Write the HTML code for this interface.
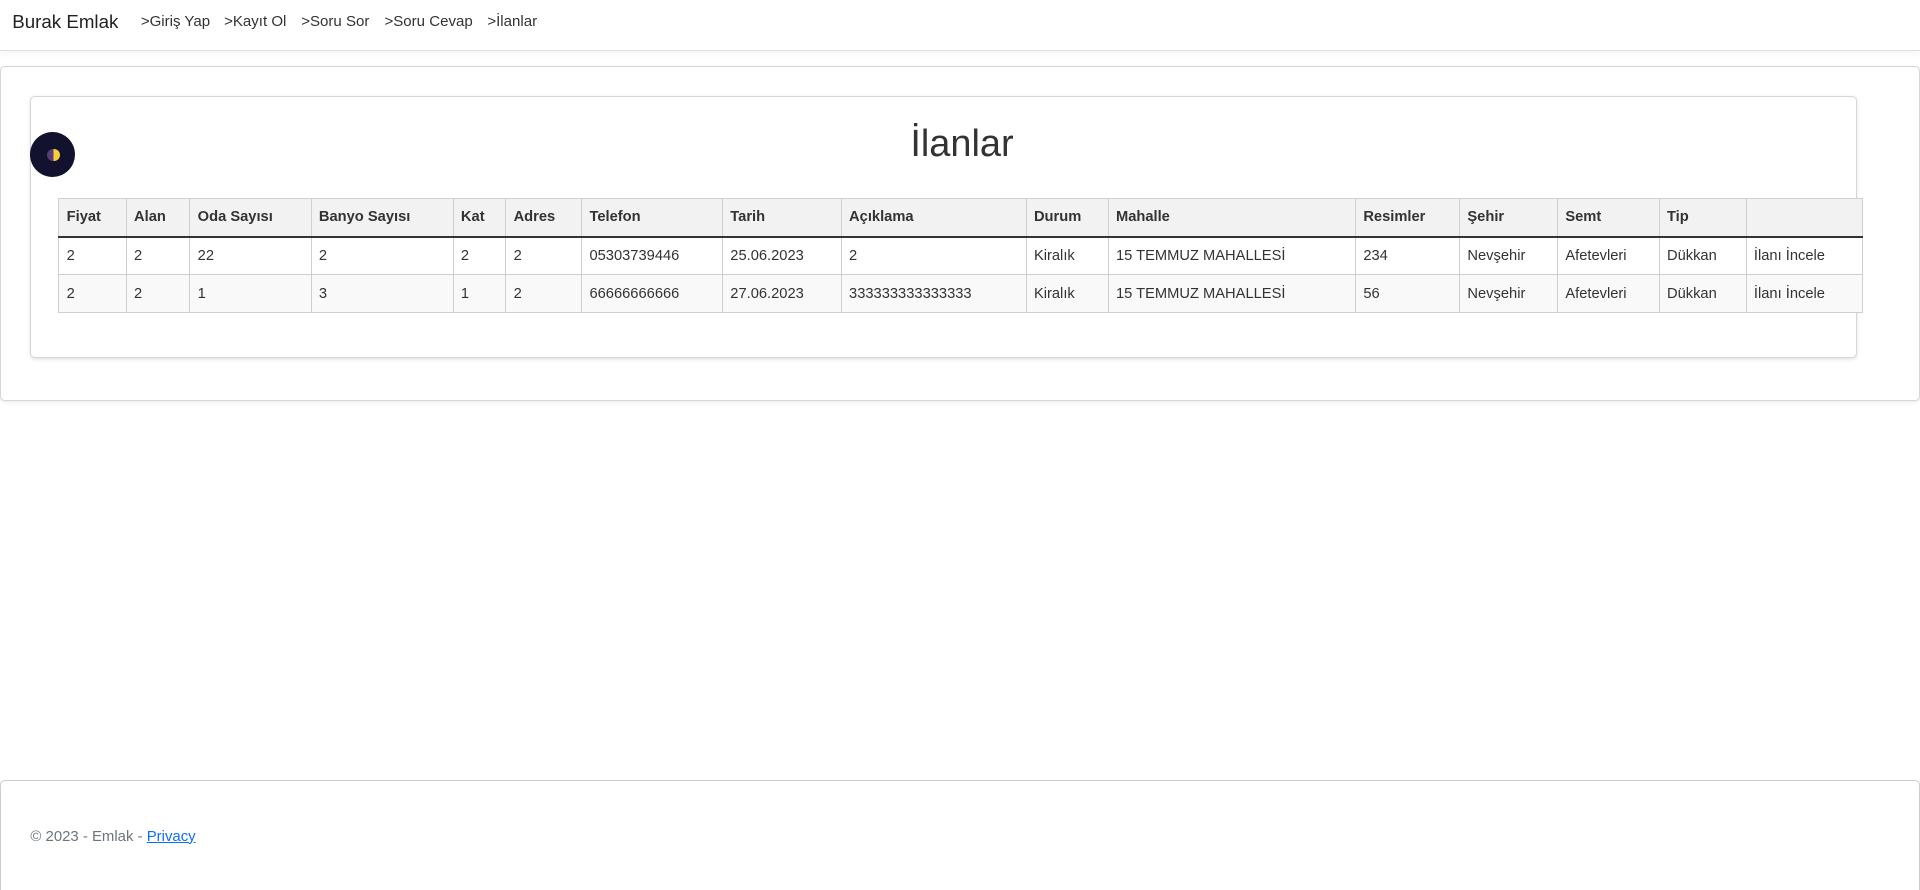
<!DOCTYPE html>
<html><head><meta charset="utf-8">
<style>
html{margin:0;padding:0;background:#fff;height:890px;overflow:hidden;}
body{margin:0;padding:0;zoom:1.2245;width:1568px;height:726px;overflow:hidden;position:relative;font-family:"Liberation Sans",Arial,sans-serif;color:#333;}
.nav{position:absolute;left:0;top:0;width:1568px;height:41px;border-bottom:1px solid #e0e0e0;box-shadow:0 2px 6px rgba(0,0,0,.05);}
.brand{position:absolute;left:10px;top:9px;font-size:15.3px;color:#222;}
.links a{position:absolute;top:11px;font-size:12.3px;color:#333;text-decoration:none;}
.outer{position:absolute;left:0;top:54px;width:1566px;height:272px;border:1px solid #d6d6d6;border-radius:4px;box-shadow:0 1px 3px rgba(0,0,0,.08);}
.inner{position:absolute;left:24px;top:24px;width:1490px;height:212px;border:1px solid #d6d6d6;border-radius:4px;box-shadow:0 1px 3px rgba(0,0,0,.12);}
h1{position:absolute;left:0;width:1520px;top:21px;margin:0;text-align:center;font-weight:normal;font-size:31px;color:#333;}
.btn{position:absolute;left:-1px;top:28px;width:37px;height:37px;border-radius:50%;background:#12122e;}
.moon{position:absolute;left:14px;top:14px;width:10px;height:10px;border-radius:50%;background:linear-gradient(90deg,#5b3b77 50%,#f5cf3a 50%);}
table{position:absolute;left:22px;top:82px;border-collapse:collapse;table-layout:fixed;width:1473px;font-size:12px;}
th,td{border:1px solid #cfcfcf;padding:0 6px;text-align:left;height:30px;white-space:nowrap;overflow:hidden;background:#fff;}
th{background:#f2f2f2;font-weight:bold;color:#333;border-bottom:2px solid #333;}
tr.r2 td{background:#f9f9f9;}
.footer{position:absolute;left:0;top:637px;width:1566px;height:89px;border:1px solid #ccc;border-bottom:none;border-radius:4px 4px 0 0;}
.footer p{position:absolute;left:24px;top:38px;margin:0;font-size:12.2px;color:#6c757d;}
.footer a{color:#0d6efd;text-decoration:underline;}
</style></head><body>
<div class="nav">
<div class="brand">Burak Emlak</div>
<div class="links">
<a style="left:115px">&gt;Giriş Yap</a>
<a style="left:183px">&gt;Kayıt Ol</a>
<a style="left:246px">&gt;Soru Sor</a>
<a style="left:314px">&gt;Soru Cevap</a>
<a style="left:398px">&gt;İlanlar</a>
</div>
</div>
<div class="outer">
<div class="inner">
<h1>İlanlar</h1>
<div class="btn"><div class="moon"></div></div>
<table>
<colgroup><col style="width:55px"><col style="width:52px"><col style="width:99px"><col style="width:116px"><col style="width:43px"><col style="width:62px"><col style="width:115px"><col style="width:97px"><col style="width:151px"><col style="width:67px"><col style="width:202px"><col style="width:85px"><col style="width:80px"><col style="width:83px"><col style="width:71px"><col style="width:95px"></colgroup>
<tr><th>Fiyat</th><th>Alan</th><th>Oda Sayısı</th><th>Banyo Sayısı</th><th>Kat</th><th>Adres</th><th>Telefon</th><th>Tarih</th><th>Açıklama</th><th>Durum</th><th>Mahalle</th><th>Resimler</th><th>Şehir</th><th>Semt</th><th>Tip</th><th></th></tr>
<tr><td>2</td><td>2</td><td>22</td><td>2</td><td>2</td><td>2</td><td>05303739446</td><td>25.06.2023</td><td>2</td><td>Kiralık</td><td>15 TEMMUZ MAHALLESİ</td><td>234</td><td>Nevşehir</td><td>Afetevleri</td><td>Dükkan</td><td>İlanı İncele</td></tr>
<tr class="r2"><td>2</td><td>2</td><td>1</td><td>3</td><td>1</td><td>2</td><td>66666666666</td><td>27.06.2023</td><td>333333333333333</td><td>Kiralık</td><td>15 TEMMUZ MAHALLESİ</td><td>56</td><td>Nevşehir</td><td>Afetevleri</td><td>Dükkan</td><td>İlanı İncele</td></tr>
</table>
</div>
</div>
<div class="footer"><p>© 2023 - Emlak - <a>Privacy</a></p></div>
</body></html>
